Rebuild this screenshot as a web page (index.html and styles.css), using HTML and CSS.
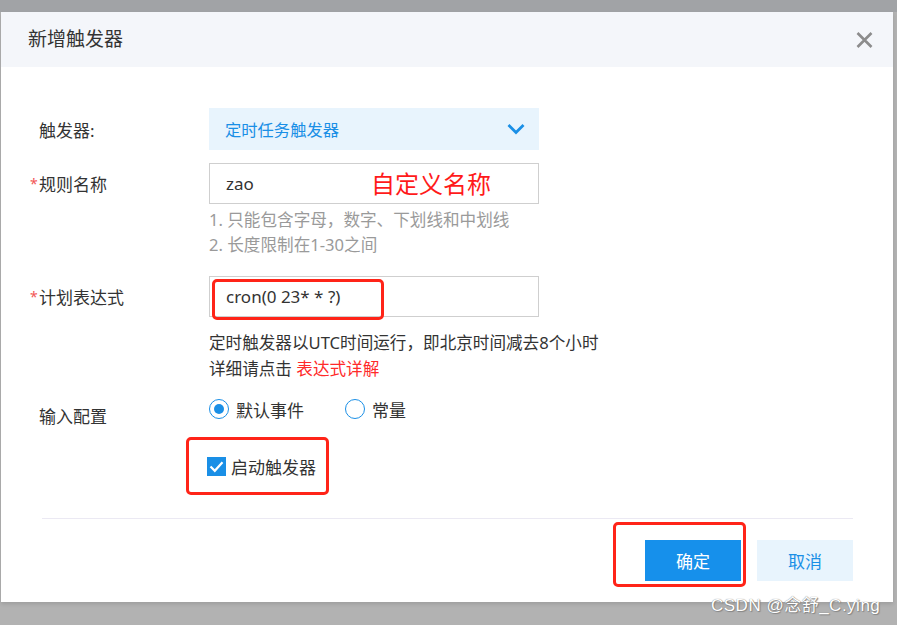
FILE: index.html
```html
<!DOCTYPE html>
<html lang="zh-CN">
<head>
<meta charset="utf-8">
<title>新增触发器</title>
<link rel="stylesheet" href="styles.css">
</head>
<body>
<div class="dialog">
  <div class="dlg-header">
    <span class="dlg-title">新增触发器</span>
    <svg class="dlg-close" width="17" height="16" viewBox="0 0 17 16"><path d="M1.5 1 L15.5 15 M15.5 1 L1.5 15" stroke="#8c8c8c" stroke-width="2.6" fill="none"/></svg>
  </div>
  <div class="dlg-body">
    <div class="row row-select">
      <div class="label">触发器:</div>
      <div class="select">
        <span>定时任务触发器</span>
        <svg class="chev" width="18" height="12" viewBox="0 0 18 12"><path d="M1.5 2 L9 9.5 L16.5 2" stroke="#1a8fe6" stroke-width="2.8" fill="none"/></svg>
      </div>
    </div>
    <div class="row row-name">
      <div class="label"><span class="req">*</span>规则名称</div>
      <div class="field">
        <div class="input">zao</div>
        <span class="note">自定义名称</span>
      </div>
    </div>
    <div class="hints gray">
      <div>1. 只能包含字母，数字、下划线和中划线</div>
      <div>2. 长度限制在1-30之间</div>
    </div>
    <div class="row row-cron">
      <div class="label"><span class="req">*</span>计划表达式</div>
      <div class="field">
        <div class="input">cron(0 23* * ?)</div>
        <span class="mark mark-cron"></span>
      </div>
    </div>
    <div class="hints dark">
      <div>定时触发器以UTC时间运行，即北京时间减去8个小时</div>
      <div>详细请点击 <span class="link">表达式详解</span></div>
    </div>
    <div class="row row-radio">
      <div class="label label-low">输入配置</div>
      <div class="radios">
        <span class="radio on"><i></i>默认事件</span>
        <span class="radio"><i></i>常量</span>
      </div>
    </div>
    <div class="row-check">
      <div class="check-wrap">
        <span class="checkbox"><svg width="19" height="19" viewBox="0 0 19 19"><path d="M3.5 9.5 L7.8 13.8 L15.5 5.2" stroke="#fff" stroke-width="2.2" fill="none"/></svg></span>
        <span>启动触发器</span>
      </div>
    </div>
    <div class="divider"></div>
    <div class="footer">
      <div class="btn-wrap">
        <button class="btn btn-primary">确定</button>
        <span class="mark mark-ok"></span>
      </div>
      <button class="btn btn-light">取消</button>
    </div>
  </div>
</div>
<div class="watermark">CSDN @念舒_C.ying</div>
</body>
</html>
```

FILE: styles.css
```css
html, body {
  margin: 0;
  padding: 0;
}
body {
  width: 897px;
  height: 625px;
  overflow: hidden;
  position: relative;
  background: linear-gradient(#a1a3a6 0 12px, #b2b2b2 12px);
  font-family: "Noto Sans", "Noto Sans CJK SC", sans-serif;
  color: #333;
  padding-top: 12px;
  box-sizing: border-box;
}
.dialog {
  margin-left: 1px;
  width: 892px;
  height: 590px;
  background: #fff;
  box-shadow: 0 2px 4px rgba(0,0,0,0.12);
}
.dlg-header {
  height: 55px;
  background: #f4f6fa;
  display: flex;
  align-items: center;
  justify-content: space-between;
  padding: 0 20px 0 27px;
}
.dlg-title {
  font-size: 19px;
  color: #333;
  line-height: 1;
}
.dlg-close {
  display: block;
}
.dlg-body {
  padding-top: 41px;
}
.row {
  display: flex;
  align-items: center;
}
.label {
  width: 208px;
  padding-left: 29px;
  box-sizing: border-box;
  font-size: 17px;
  color: #333;
  flex: none;
}
.row-select .label,
.row .label-low {
  padding-left: 38px;
}
.req {
  display: inline-block;
  width: 9px;
  color: #f25656;
  font-size: 14px;
  vertical-align: 2px;
}
.select {
  width: 330px;
  height: 42px;
  background: #e8f4fd;
  display: flex;
  align-items: center;
  justify-content: space-between;
  padding: 0 14px 0 16px;
  box-sizing: border-box;
  color: #1a8fe6;
  font-size: 16.3px;
}
.row-name {
  margin-top: 13px;
}
.field {
  position: relative;
}
.input {
  width: 330px;
  height: 41px;
  border: 1px solid #cfcfcf;
  box-sizing: border-box;
  padding-left: 16px;
  display: flex;
  align-items: center;
  font-size: 17px;
  color: #333;
}
.note {
  position: absolute;
  left: 162px;
  top: 4px;
  font-size: 24px;
  color: #ff1a1a;
  line-height: 34px;
}
.hints {
  margin-left: 208px;
  font-size: 16.6px;
}
.hints.gray {
  color: #9a9a9a;
  margin-top: 3px;
  line-height: 25px;
}
.row-cron {
  margin-top: 19px;
}
.mark {
  position: absolute;
  border: 3px solid #ff2418;
  border-radius: 5px;
  box-sizing: border-box;
}
.mark-cron {
  left: 3px;
  top: 3px;
  width: 172px;
  height: 41px;
}
.hints.dark {
  color: #333;
  margin-top: 13px;
  line-height: 26px;
}
.link {
  color: #ff2a2a;
}
.row-radio {
  margin-top: 17px;
  align-items: flex-start;
}
.label-low {
  padding-top: 8px;
  line-height: 20px;
}
.radios {
  display: flex;
  align-items: center;
  height: 20px;
  font-size: 17px;
}
.radio {
  display: inline-flex;
  align-items: center;
  margin-right: 41px;
}
.radio i {
  width: 20px;
  height: 20px;
  border: 1.5px solid #1a8fe6;
  border-radius: 50%;
  box-sizing: border-box;
  margin-right: 7px;
  position: relative;
}
.radio.on i::after {
  content: "";
  position: absolute;
  left: 3.5px;
  top: 3.5px;
  width: 10px;
  height: 10px;
  border-radius: 50%;
  background: #1a8fe6;
}
.row-check {
  margin-top: 10px;
  padding-left: 185px;
}
.check-wrap {
  display: inline-flex;
  align-items: center;
  border: 3px solid #ff2418;
  border-radius: 5px;
  padding: 0 10px 0 18px;
  font-size: 17px;
  color: #333;
  height: 58px;
  box-sizing: border-box;
  white-space: nowrap;
}
.checkbox {
  width: 19px;
  height: 19px;
  background: #1a8fe6;
  margin-right: 5px;
  flex: none;
}
.checkbox svg {
  display: block;
}
.divider {
  margin: 23px 40px 0 41px;
  height: 1px;
  background: #ebe9f3;
}
.footer {
  display: flex;
  justify-content: flex-end;
  gap: 16px;
  padding-right: 40px;
  margin-top: 21px;
}
.btn-wrap {
  position: relative;
}
.btn {
  width: 96px;
  height: 41px;
  border: none;
  font-family: "Noto Sans", "Noto Sans CJK SC", sans-serif;
  font-size: 17px;
  padding: 0;
  display: block;
}
.btn-primary {
  background: #1690eb;
  color: #fff;
}
.btn-light {
  background: #e8f4fd;
  color: #1a8fe6;
}
.mark-ok {
  left: -32px;
  top: -18px;
  width: 133px;
  height: 65px;
}
.watermark {
  position: absolute;
  left: 711px;
  top: 591px;
  font-size: 17px;
  color: #fff;
  font-family: "Liberation Sans", "Noto Sans CJK SC", sans-serif;
  text-shadow: 0 0 1px #666, 1px 1px 1px #888;
  letter-spacing: 0.5px;
}
```
